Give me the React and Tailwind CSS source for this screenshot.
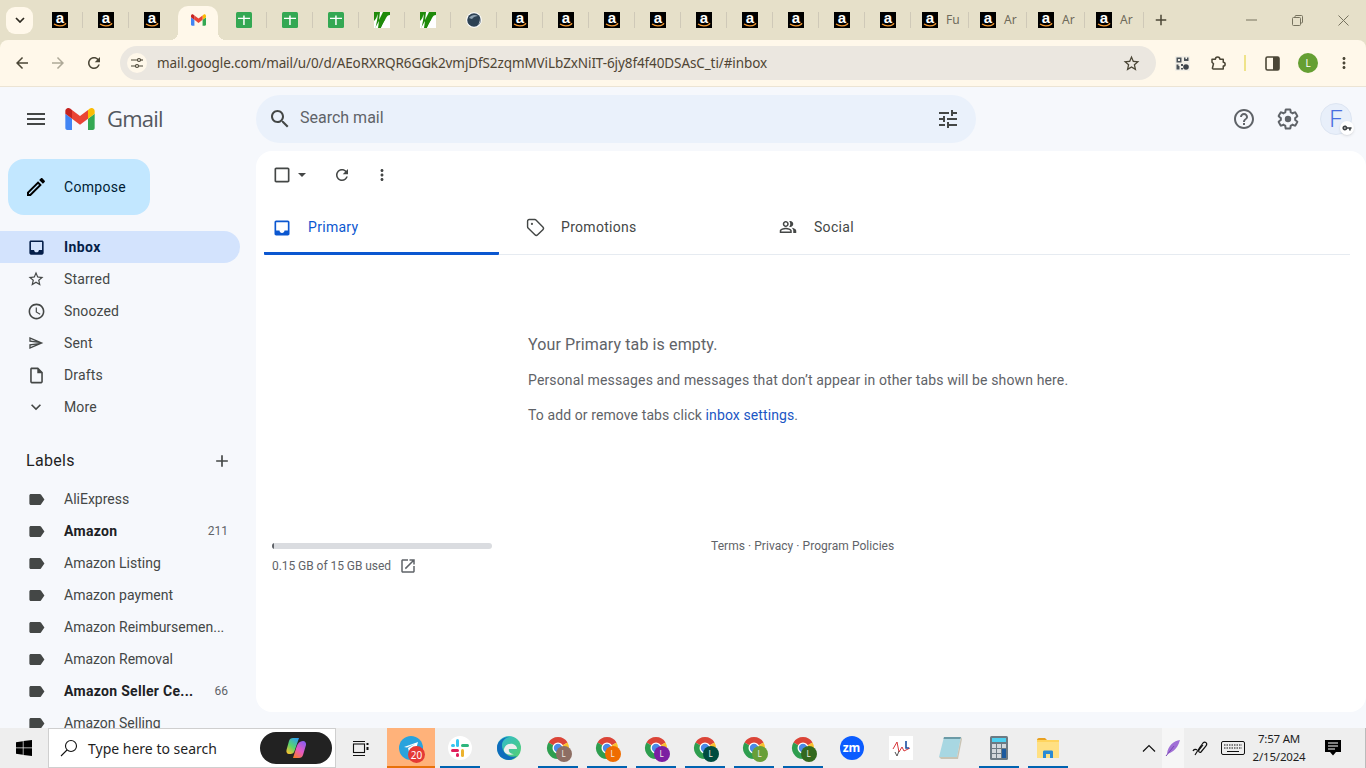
import React from "react";
import { Tag } from "lucide-react";

const P = {
  inbox: "M19 3H5c-1.1 0-2 .9-2 2v14c0 1.1.9 2 2 2h14c1.1 0 2-.9 2-2V5c0-1.1-.9-2-2-2zm0 12h-4c0 1.66-1.35 3-3 3s-3-1.34-3-3H5V5h14v10z",
  star: "M22 9.24l-7.19-.62L12 2 9.19 8.63 2 9.24l5.46 4.73L5.82 21 12 17.27 18.18 21l-1.63-7.03L22 9.24zM12 15.4l-3.76 2.27 1-4.28-3.32-2.88 4.38-.38L12 6.1l1.71 4.04 4.38.38-3.32 2.88 1 4.28L12 15.4z",
  clock: "M11.99 2C6.47 2 2 6.48 2 12s4.47 10 9.99 10C17.52 22 22 17.52 22 12S17.52 2 11.99 2zM12 20c-4.42 0-8-3.58-8-8s3.58-8 8-8 8 3.58 8 8-3.58 8-8 8zm.5-13H11v6l5.25 3.15.75-1.23-4.5-2.67z",
  send: "M4.01 6.03l7.51 3.22-7.52-1 .01-2.22m7.5 8.72L4 17.97v-2.22l7.51-1M2.01 3L2 10l15 2-15 2 .01 7L23 12 2.01 3z",
  draft: "M14 2H6c-1.1 0-1.99.9-1.99 2L4 20c0 1.1.89 2 1.99 2H18c1.1 0 2-.9 2-2V8l-6-6zM6 20V4h7v5h5v11H6z",
  more: "M16.59 8.59L12 13.17 7.41 8.59 6 10l6 6 6-6z",
  label: "M17.63 5.84C17.27 5.33 16.67 5 16 5L5 5.01C3.9 5.01 3 5.9 3 7v10c0 1.1.9 1.99 2 1.99L16 19c.67 0 1.27-.33 1.63-.84L22 12l-4.37-6.16z",
  add: "M19 13h-6v6h-2v-6H5v-2h6V5h2v6h6v2z",
  menu: "M3 18h18v-2H3v2zm0-5h18v-2H3v2zm0-7v2h18V6H3z",
  edit: "M14.06 9.02l.92.92L5.92 19H5v-.92l9.06-9.06M17.66 3c-.25 0-.51.1-.7.29l-1.83 1.83 3.75 3.75 1.83-1.83c.39-.39.39-1.02 0-1.41l-2.34-2.34c-.2-.2-.45-.29-.71-.29zm-3.6 3.19L3 17.25V21h3.75L17.81 9.94l-3.75-3.75z",
  search: "M15.5 14h-.79l-.28-.27C15.41 12.59 16 11.11 16 9.5 16 5.91 13.09 3 9.5 3S3 5.91 3 9.5 5.91 16 9.5 16c1.61 0 3.09-.59 4.23-1.57l.27.28v.79l5 4.99L20.49 19l-4.99-5zm-6 0C7.01 14 5 11.99 5 9.5S7.01 5 9.5 5 14 7.01 14 9.5 11.99 14 9.5 14z",
  tune: "M3 17v2h6v-2H3zM3 5v2h10V5H3zm10 16v-2h8v-2h-8v-2h-2v6h2zM7 9v2H3v2h4v2h2V9H7zm14 4v-2H11v2h10zm-6-4h2V7h4V5h-4V3h-2v6z",
  help: "M11 18h2v-2h-2v2zm1-16C6.48 2 2 6.48 2 12s4.48 10 10 10 10-4.48 10-10S17.52 2 12 2zm0 18c-4.41 0-8-3.59-8-8s3.59-8 8-8 8 3.59 8 8-3.59 8-8 8zm0-14c-2.21 0-4 1.79-4 4h2c0-1.1.9-2 2-2s2 .9 2 2c0 2-3 1.75-3 5h2c0-2.25 3-2.5 3-5 0-2.21-1.79-4-4-4z",
  refresh: "M17.65 6.35C16.2 4.9 14.21 4 12 4c-4.42 0-7.99 3.58-7.99 8s3.57 8 7.99 8c3.73 0 6.84-2.55 7.73-6h-2.08c-.82 2.33-3.04 4-5.65 4-3.31 0-6-2.69-6-6s2.69-6 6-6c1.66 0 3.14.69 4.22 1.78L13 11h7V4l-2.35 2.35z",
  vert: "M12 8c1.1 0 2-.9 2-2s-.9-2-2-2-2 .9-2 2 .9 2 2 2zm0 2c-1.1 0-2 .9-2 2s.9 2 2 2 2-.9 2-2-.9-2-2-2zm0 6c-1.1 0-2 .9-2 2s.9 2 2 2 2-.9 2-2-.9-2-2-2z",
  check: "M19 5v14H5V5h14m0-2H5c-1.1 0-2 .9-2 2v14c0 1.1.9 2 2 2h14c1.1 0 2-.9 2-2V5c0-1.1-.9-2-2-2z",
  people: "M16.67 13.13C18.04 14.06 19 15.32 19 17v3h4v-3c0-2.18-3.57-3.47-6.33-3.87zM15 12c2.21 0 4-1.79 4-4s-1.79-4-4-4c-.47 0-.91.1-1.33.24C14.5 5.27 15 6.58 15 8s-.5 2.73-1.33 3.76c.42.14.86.24 1.33.24zM9 12c2.21 0 4-1.79 4-4s-1.79-4-4-4-4 1.79-4 4 1.79 4 4 4zm0-6c1.1 0 2 .9 2 2s-.9 2-2 2-2-.9-2-2 .9-2 2-2zM9 13c-2.67 0-8 1.34-8 4v3h16v-3c0-2.66-5.33-4-8-4zm6 5H3v-.99C3.2 16.29 6.3 15 9 15s5.8 1.29 6 2v1z",
  open: "M19 19H5V5h7V3H5c-1.11 0-2 .9-2 2v14c0 1.1.89 2 2 2h14c1.1 0 2-.9 2-2v-7h-2v7zM14 3v2h3.59l-9.83 9.83 1.41 1.41L19 6.41V10h2V3h-7z",
  key: "M12.65 10C11.83 7.67 9.61 6 7 6c-3.31 0-6 2.69-6 6s2.69 6 6 6c2.61 0 4.83-1.67 5.65-4H17v4h4v-4h2v-4H12.65zM7 14c-1.1 0-2-.9-2-2s.9-2 2-2 2 .9 2 2-.9 2-2 2z",
  back: "M20 11H7.83l5.59-5.59L12 4l-8 8 8 8 1.41-1.41L7.83 13H20v-2z",
  fwd: "M12 4l-1.41 1.41L16.17 11H4v2h12.17l-5.58 5.59L12 20l8-8z",
};

function Mi({ d, size = 20, color = "#444746" }) {
  return (
    <svg width={size} height={size} viewBox="0 0 24 24" fill={color} className="shrink-0">
      <path d={d} />
    </svg>
  );
}

function AmazonIcon() {
  return (
    <div className="relative w-4 h-4 shrink-0 bg-black flex justify-center">
      <span className="text-[15px] leading-[11px] font-bold text-white font-['Liberation_Sans',sans-serif]">a</span>
      <svg width="16" height="16" viewBox="0 0 16 16" className="absolute left-0 top-0">
        <path d="M2 12c3.400 2.300 8 2.300 11.500.2" stroke="#f79c34" strokeWidth="1.300" fill="none" />
        <path d="M12.400 11.300l2-.3-.5 2z" fill="#f79c34" />
      </svg>
    </div>
  );
}

function GmailM({ w = 16, h = 12 }) {
  return (
    <svg width={w} height={h} viewBox="52 42 88 66" className="shrink-0">
      <path fill="#4285f4" d="M58 108h14V74L52 59v43c0 3.32 2.69 6 6 6" />
      <path fill="#34a853" d="M120 108h14c3.32 0 6-2.69 6-6V59l-20 15" />
      <path fill="#fbbc04" d="M120 48v26l20-15v-8c0-7.42-8.47-11.65-14.4-7.2" />
      <path fill="#ea4335" d="M72 74V48l24 18 24-18v26L96 92" />
      <path fill="#c5221f" d="M52 51v8l20 15V48l-5.6-4.2c-5.94-4.45-14.4-.22-14.4 7.2" />
    </svg>
  );
}

function SheetIcon() {
  return (
    <svg width="16" height="16" viewBox="0 0 16 16" className="shrink-0">
      <rect width="16" height="16" rx="1.500" fill="#34a853" />
      <path d="M2 5.700h5.200V3.500h1.500v2.200H14v1.400H8.700V13H7.200V7.100H2z" fill="#fff" />
    </svg>
  );
}

function WIcon() {
  return (
    <svg width="16" height="16" viewBox="0 0 16 16" className="shrink-0">
      <rect width="16" height="16" fill="#fff" />
      <path d="M1 0h5L5 8l4-8h7v3c-2 0-3 1-4 3l-5 10H4l1-7-4 7H0V0z" fill="#1f8a0a" />
      <path d="M0 9C2 7 3 5 3.500 2 4 5 3 9 1.500 16H0zM8 14c2-4 4-8 8-9v3c-3 1-4 4-6 8H7z" fill="#fff" />
    </svg>
  );
}

function GlobeDark() {
  return (
    <svg width="16" height="16" viewBox="0 0 16 16" className="shrink-0">
      <circle cx="8" cy="8" r="7.800" fill="#fff" />
      <circle cx="8" cy="8" r="6.800" fill="#2d4254" />
      <path d="M3 6c2-3 6-4 9-2-2 0-5 1-6 3z" fill="#8fa3b3" />
      <path d="M14 6c1 3 0 6-3 8 2-2 3-4 3-8z" fill="#fff" />
    </svg>
  );
}

const tabs = [
  [AmazonIcon], [AmazonIcon], [AmazonIcon], ["gmail"], [SheetIcon], [SheetIcon], [SheetIcon], [WIcon], [WIcon], [GlobeDark],
  [AmazonIcon], [AmazonIcon], [AmazonIcon], [AmazonIcon], [AmazonIcon], [AmazonIcon], [AmazonIcon], [AmazonIcon], [AmazonIcon],
];

function TabStrip() {
  return (
    <div className="h-10 bg-[#e6e0c9] flex items-stretch shrink-0 relative">
      <div className="w-[37px] shrink-0 flex items-center pl-[6px]">
        <div className="w-[27px] h-[27px] rounded-[9px] bg-[#fff8ea] flex items-center justify-center">
          <svg width="10" height="6" viewBox="0 0 10 6"><path d="M1 1l4 4 4-4" stroke="#2e2a20" strokeWidth="1.700" fill="none" /></svg>
        </div>
      </div>
      {tabs.map(([I], i) => {
        if (I === "gmail")
          return (
            <div key={i} className="w-[46px] shrink-0 relative flex items-center justify-center">
              <div className="absolute left-[3px] right-[3px] top-[6px] bottom-0 bg-[#fff8ea] rounded-t-[10px]" />
              <div className="absolute left-[-5px] bottom-0 w-2 h-2 bg-[radial-gradient(circle_at_0_0,transparent_8px,#fff8ea_8px)]" />
              <div className="absolute right-[-5px] bottom-0 w-2 h-2 bg-[radial-gradient(circle_at_100%_0,transparent_8px,#fff8ea_8px)]" />
              <div className="relative"><GmailM w={15} h={12} /></div>
            </div>
          );
        const noSep = i === 2 || i === 3;
        return (
          <div key={i} className="w-[46px] shrink-0 flex items-center justify-center relative">
            <I />
            {!noSep && <span className="absolute right-0 top-[12px] h-4 w-[1.5px] bg-[#cfc9b8]" />}
          </div>
        );
      })}
      {[["Fu", 58], ["Ar", 58], ["Ar", 58], ["Ar", 59]].map(([t, w], i) => (
        <div key={i} className={`shrink-0 flex items-center pl-[11px] relative ${w === 59 ? "w-[59px]" : "w-[58px]"}`}>
          <AmazonIcon />
          <span className="ml-[8px] text-[12px] text-[#6e6a5a] font-['Noto_Sans',sans-serif]">{t}</span>
          <span className="absolute right-0 top-[12px] h-4 w-[1.5px] bg-[#cfc9b8]" />
        </div>
      ))}
      <div className="w-[34px] shrink-0 flex items-center justify-center">
        <Mi d={P.add} size={18} color="#4b4636" />
      </div>
      <div className="ml-auto flex items-center text-[#6e6a5a]">
        <div className="w-[46px] flex justify-center">
          <svg width="11" height="2" viewBox="0 0 11 2"><path d="M0 1h11" stroke="#77735f" strokeWidth="1" /></svg>
        </div>
        <div className="w-[46px] flex justify-center">
          <svg width="11" height="11" viewBox="0 0 11 11" fill="none" stroke="#77735f" strokeWidth="1"><rect x=".5" y="2.500" width="8" height="8" rx="1" /><path d="M3 2.500V1.500a1 1 0 0 1 1-1h5.500a1 1 0 0 1 1 1V7a1 1 0 0 1-1 1h-1" /></svg>
        </div>
        <div className="w-[46px] flex justify-center">
          <svg width="11" height="11" viewBox="0 0 11 11" fill="none" stroke="#77735f" strokeWidth="1"><path d="M.5.500l10 10M10.500.500l-10 10" /></svg>
        </div>
      </div>
    </div>
  );
}

function ChromeToolbar() {
  const c = "#4b4636";
  return (
    <div className="h-[47px] shrink-0 bg-[#fff8ea] rounded-t-[8px] border-b border-[#ece4d4] flex items-start pl-1 pt-[6px]">
      {[[P.back, c], [P.fwd, "#aea998"], [P.refresh, c]].map(([d, col], i) => (
        <div key={i} className="w-9 h-[34px] flex items-center justify-center"><Mi d={d} size={18} color={col} /></div>
      ))}
      <div className="ml-2 w-[1036px] h-[34px] rounded-full bg-[#ebe7e0] flex items-center pl-[7px] pr-[15px]">
        <div className="w-5 h-5 rounded-full bg-[#fff8ea] flex items-center justify-center">
          <svg width="12" height="12" viewBox="0 0 12 12" fill="none" stroke="#4b4636" strokeWidth="1.200"><path d="M0 3h6M0 9h4M8 9h4" /><circle cx="8" cy="3" r="1.500" /><circle cx="6" cy="9" r="1.500" /><path d="M9.500 3H12" /></svg>
        </div>
        <span className="ml-[10px] text-[13.5px] text-[#4f4534] tracking-[-0.1px] font-['Noto_Sans',sans-serif] whitespace-nowrap">mail.google.com/mail/u/0/d/AEoRXRQR6GGk2vmjDfS2zqmMViLbZxNiIT-6jy8f4f40DSAsC_ti/#inbox</span>
        <div className="ml-auto"><Mi d={P.star} size={19} color={c} /></div>
      </div>
      <div className="ml-2 w-9 h-[34px] flex items-center justify-center">
        <svg width="15" height="15" viewBox="0 0 15 15">
          <rect width="15" height="15" rx="1" fill="#f2efe6" />
          <path d="M1.500 1.500h5v5h-5zM3 3v2h2V3zM9 1.500h1.500V3H12V1.500h1.500V5H9zM1.500 8.500h2V10h1v3.500h-3zM6 8h2v2H6zM6 12h2v1.500H6z" fill="#4b5258" />
          <circle cx="11" cy="11" r="2.800" fill="#3d434a" />
        </svg>
      </div>
      <div className="w-9 h-[34px] flex items-center justify-center">
        <svg width="18" height="18" viewBox="0 0 24 24" fill="none" stroke={c} strokeWidth="2"><path d="M4 7h4.500a3 3 0 0 1 6 0H19v4a2.500 2.500 0 0 1 0 5v4H5.500l-1-1 1.500-6-2-2z" strokeLinejoin="round" /></svg>
      </div>
      <div className="w-[18px] h-[34px] flex items-center justify-center">
        <span className="w-[2px] h-4 bg-[#efe38a]" />
      </div>
      <div className="w-9 h-[34px] flex items-center justify-center">
        <svg width="15" height="15" viewBox="0 0 15 15"><rect x="1" y="1" width="13" height="13" rx="1.500" fill="none" stroke={c} strokeWidth="1.600" /><rect x="8" y="1" width="6" height="13" fill={c} /></svg>
      </div>
      <div className="w-9 h-[34px] flex items-center justify-center">
        <div className="w-5 h-5 rounded-full bg-[#659f33] text-white text-[10px] flex items-center justify-center font-['Noto_Sans',sans-serif]">L</div>
      </div>
      <div className="w-9 h-[34px] flex items-center justify-center"><Mi d={P.vert} size={18} color={c} /></div>
    </div>
  );
}

const nav = [
  [P.inbox, "Inbox", 19, true],
  [P.star, "Starred", 18],
  [P.clock, "Snoozed", 19],
  [P.send, "Sent", 16],
  [P.draft, "Drafts", 19],
  [P.more, "More", 20],
];

const labels = [
  ["AliExpress"],
  ["Amazon", "211", true],
  ["Amazon Listing"],
  ["Amazon payment"],
  ["Amazon Reimbursemen..."],
  ["Amazon Removal"],
  ["Amazon Seller Ce...", "66", true],
  ["Amazon Selling"],
];

function Sidebar() {
  return (
    <aside className="w-64 shrink-0 overflow-hidden h-full">
      <div className="h-16 flex items-center pl-[24px]">
        <Mi d={P.menu} size={24} color="#444746" />
        <div className="ml-[17px]"><GmailM w={30} h={22} /></div>
        <span className="ml-3 -mt-[2px] text-[22px] leading-none text-[#545860] font-['Open_Sans',sans-serif] tracking-[-0.8px]">Gmail</span>
      </div>
      <div className="ml-2 mt-2 w-[142px] h-14 rounded-2xl bg-[#c2e7ff] flex items-center pl-[16px]">
        <Mi d={P.edit} size={24} color="#000" />
        <span className="ml-[16px] text-[14px] font-normal text-[#001d35] tracking-[0.3px]">Compose</span>
      </div>
      <nav className="mt-4 w-60">
        {nav.map(([d, t, s, act]) => (
          <div key={t} className={`h-8 flex items-center pl-[26px] rounded-r-full ${act ? "bg-[#d3e3fd]" : ""}`}>
            <div className="w-5 flex justify-center"><Mi d={d} size={s} color={act ? "#041e49" : "#444746"} /></div>
            <span className={`ml-[18px] text-[14px] ${act ? "font-bold text-[#041e49] tracking-[0.4px]" : "text-[#444746] tracking-[0.15px]"}`}>{t}</span>
          </div>
        ))}
      </nav>
      <div className="mt-[22px] h-8 flex items-center justify-between pl-[26px] pr-[24px]">
        <span className="text-[16px] font-normal text-[#1f1f1f] tracking-[0.3px]">Labels</span>
        <Mi d={P.add} size={20} color="#444746" />
      </div>
      <div className="mt-[6px]">
        {labels.map(([t, n, b]) => (
          <div key={t} className="h-8 flex items-center pl-[26px] pr-[28px]">
            <div className="w-5 flex justify-center"><Mi d={P.label} size={19} color="#444746" /></div>
            <span className={`ml-[18px] text-[14px] whitespace-nowrap ${b ? "font-bold text-[#202124] tracking-[0.3px]" : "text-[#444746]"}`}>{t}</span>
            {n && <span className="ml-auto text-[12px] text-[#5f6368]">{n}</span>}
          </div>
        ))}
      </div>
    </aside>
  );
}

function MainHeader() {
  return (
    <div className="h-16 shrink-0 flex items-center">
      <div className="w-[720px] h-12 rounded-full bg-[#eaf1fb] flex items-center pl-[12px] pr-[16px]">
        <Mi d={P.search} size={24} color="#444746" />
        <span className="ml-[8px] -mt-[2px] text-[16px] text-[#5f6368]">Search mail</span>
        <div className="ml-auto"><Mi d={P.tune} size={24} color="#444746" /></div>
      </div>
      <div className="ml-auto flex items-center pr-[14px]">
        <Mi d={P.help} size={24} color="#5f6368" />
        <div className="ml-[20px]">
          <svg width="24" height="24" viewBox="0 0 24 24" fill="none" stroke="#5f6368" strokeWidth="2">
            <path d="M19.140 12.940c.04-.3.06-.61.06-.94 0-.32-.02-.64-.07-.94l2.030-1.580c.18-.14.23-.41.12-.61l-1.920-3.320c-.12-.22-.37-.29-.59-.22l-2.390.96c-.5-.38-1.030-.7-1.620-.94l-.36-2.540c-.04-.24-.24-.41-.48-.41h-3.840c-.24 0-.43.17-.47.41l-.36 2.540c-.59.24-1.130.57-1.620.94l-2.390-.96c-.22-.08-.47 0-.59.22L2.740 8.870c-.12.21-.08.47.12.61l2.030 1.580c-.05.3-.09.63-.09.94s.02.64.07.94l-2.030 1.580c-.18.14-.23.41-.12.61l1.920 3.320c.12.22.37.29.59.22l2.390-.96c.5.38 1.030.7 1.620.94l.36 2.540c.05.24.24.41.48.41h3.840c.24 0 .44-.17.47-.41l.36-2.540c.59-.24 1.130-.56 1.620-.94l2.390.96c.22.08.47 0 .59-.22l1.920-3.320c.12-.22.07-.47-.12-.61l-2.010-1.580z" />
            <circle cx="12" cy="12" r="3.200" fill="#5f6368" stroke="none" />
          </svg>
        </div>
        <div className="ml-[20px] relative w-8 h-8 rounded-full bg-[#e8effa] border border-[#dde5f2] flex items-center justify-center">
          <span className="text-[24px] font-light leading-none text-[#4a6ee0]">F</span>
          <div className="absolute -right-[3px] -bottom-[1px] w-[14px] h-[14px] rounded-full bg-white shadow flex items-center justify-center">
            <Mi d={P.key} size={10} color="#3c4043" />
          </div>
        </div>
      </div>
    </div>
  );
}

function Panel() {
  return (
    <div className="h-[561px] shrink-0 bg-white rounded-2xl flex flex-col overflow-hidden">
      <div className="h-12 shrink-0 flex items-center pl-[16px]">
        <Mi d={P.check} size={20} color="#444746" />
        <svg width="8" height="4" viewBox="0 0 10 5" className="ml-[6px]"><path d="M0 0h10L5 5z" fill="#444746" /></svg>
        <div className="ml-[27px]"><Mi d={P.refresh} size={18} color="#444746" /></div>
        <div className="ml-[22px]"><Mi d={P.vert} size={18} color="#444746" /></div>
      </div>
      <div className="ml-2 mr-4 h-14 shrink-0 flex border-b border-[#e6ebf1]">
        <div className="w-[235px] mr-[18px] h-14 border-b-[3px] border-[#0b57d0] flex items-center pl-[8px] pt-[4px] rounded-b-[1px]">
          <Mi d={P.inbox} size={20} color="#0b57d0" />
          <span className="ml-[16px] text-[14px] font-normal text-[#0b57d0] tracking-[0.3px]">Primary</span>
        </div>
        <div className="w-[253px] flex items-center pl-[9px] pt-[1px]">
          <Tag size={19} color="#444746" strokeWidth={1.8} className="shrink-0" />
          <span className="ml-[16px] text-[14px] font-normal text-[#444746] tracking-[0.3px]">Promotions</span>
        </div>
        <div className="flex items-center pl-[9px] pt-[1px]">
          <Mi d={P.people} size={18} color="#444746" />
          <span className="ml-[17px] text-[14px] font-normal text-[#444746] tracking-[0.3px]">Social</span>
        </div>
      </div>
      <div className="pl-[272px] pt-[80px] text-[#5f6368]">
        <div className="text-[16px] leading-5 tracking-[0.12px]">Your Primary tab is empty.</div>
        <div className="mt-[15px] text-[14px] leading-5 tracking-[0.14px]">Personal messages and messages that don’t appear in other tabs will be shown here.</div>
        <div className="mt-[15px] text-[14px] leading-5 tracking-[0.1px]">To add or remove tabs click <span className="text-[#1a56c4]">inbox settings</span>.</div>
      </div>
      <div className="mt-[118px] flex pl-4">
        <div className="w-[220px]">
          <div className="h-[6px] rounded-full bg-[#dadce0] overflow-hidden"><div className="w-[2px] h-full bg-[#5f6368]" /></div>
          <div className="mt-[8px] flex items-center text-[12px] text-[#5f6368] tracking-[-0.05px]">
            0.15 GB of 15 GB used
            <div className="ml-[8px]"><Mi d={P.open} size={18} color="#5f6368" /></div>
          </div>
        </div>
        <div className="ml-[219px] -mt-[4px] text-[12px] leading-[14px] text-[#5f6368] tracking-[0.05px]">Terms · Privacy · Program Policies</div>
      </div>
    </div>
  );
}

function ChromeIcon({ badge, text = "#f1e9e2" }) {
  return (
    <div className="relative w-6 h-6">
      <svg width="24" height="24" viewBox="0 0 24 24">
        <path d="M12 12 2.470 6.500A11 11 0 0 1 21.530 6.500z" fill="#db4437" />
        <path d="M12 12 21.530 6.500A11 11 0 0 1 12 23z" fill="#fbc02d" />
        <path d="M12 12 12 23A11 11 0 0 1 2.470 6.500z" fill="#2e9e4f" />
        <circle cx="12" cy="12" r="5.500" fill="#fff" />
        <circle cx="12" cy="12" r="4.200" fill="#4a8ae8" />
      </svg>
      <div className="absolute left-[10px] top-[10px] w-4 h-4 rounded-full flex items-center justify-center text-[8px] font-['Noto_Sans',sans-serif]" style={{ background: badge, color: text }}>L</div>
    </div>
  );
}

function Tile({ children, bar = true }) {
  return (
    <div className="w-[49px] h-full shrink-0 relative flex items-center justify-center">
      {children}
      {bar && <span className="absolute bottom-0 left-[5px] w-10 h-[2px] bg-[#0063b1]" />}
    </div>
  );
}

function Taskbar() {
  return (
    <div className="h-10 shrink-0 bg-[#eeeeee] flex items-stretch font-['Noto_Sans',sans-serif]">
      <div className="w-12 shrink-0 flex items-center justify-center">
        <svg width="16" height="16" viewBox="0 0 16 16" fill="#000"><path d="M0 2.200 6.800 1.200V7.500H0zM7.500 1.100 16 0V7.500H7.500zM0 8.200H6.800V14.800L0 13.800zM7.500 8.200H16V16L7.500 14.900z" /></svg>
      </div>
      <div className="w-[288px] shrink-0 bg-white border border-[#cfcfcf] flex items-center pl-[11px] pr-[3px]">
        <svg width="18" height="18" viewBox="0 0 18 18" fill="none" stroke="#111" strokeWidth="1.100"><circle cx="11" cy="7" r="5.500" /><path d="M7 11l-6 6" /></svg>
        <span className="ml-[10px] text-[14px] text-[#1f1f1f]">Type here to search</span>
        <div className="ml-auto w-[72px] h-8 rounded-full bg-[#222] flex items-center justify-center">
          <svg width="22" height="22" viewBox="0 0 22 22">
            <defs>
              <linearGradient id="cp1" x1="0.800" y1="0" x2="0.200" y2="1"><stop offset="0" stopColor="#2f9ff0" /><stop offset=".55" stopColor="#5bd46a" /><stop offset="1" stopColor="#f7c22f" /></linearGradient>
              <linearGradient id="cp2" x1="0.800" y1="0" x2="0.200" y2="1"><stop offset="0" stopColor="#8a5cf0" /><stop offset=".55" stopColor="#e85ac0" /><stop offset="1" stopColor="#f77a2f" /></linearGradient>
            </defs>
            <path d="M8 1h6L9.500 14c-.5 2-2 3-4 3H4C2 17 1 15 1.500 13L4 4c.5-2 2-3 4-3z" fill="url(#cp1)" />
            <path d="M18 4c2 0 3.500 2 3 4L18 18c-.5 2-2 3-4 3H8l3.500-11C12.500 6 15 4 18 4z" fill="url(#cp2)" />
          </svg>
        </div>
      </div>
      <div className="w-[51px] shrink-0 flex items-center justify-center pr-[3px]">
        <svg width="17" height="17" viewBox="0 0 17 17" fill="none" stroke="#111" strokeWidth="1.100"><rect x="1.500" y="4" width="11" height="8.500" /><path d="M1 1.500h12M1 15.500h12" /><rect x="14.500" y="3" width="2" height="2" fill="#111" stroke="none" /><rect x="14.500" y="7" width="2" height="3" fill="#111" stroke="none" /></svg>
      </div>
      <div className="w-12 h-full shrink-0 relative flex items-center justify-center bg-[#ffb27a]">
        <div className="relative w-6 h-6 rounded-full bg-[#2aa3dd] flex items-center justify-center">
          <svg width="16" height="14" viewBox="0 0 16 14"><path d="M1 6 15 1l-3 11-4-3-2 2-1-4 7-4-8 3.500z" fill="#fff" /></svg>
          <div className="absolute left-[9px] top-[10px] w-[17px] h-[17px] rounded-full bg-[#e53935] text-white text-[10px] leading-none flex items-center justify-center">20</div>
        </div>
        <span className="absolute bottom-0 left-0 right-0 h-[2px] bg-[#e8710a]" />
      </div>
      <Tile>
        <svg width="24" height="24" viewBox="0 0 24 24">
          <circle cx="12" cy="12" r="12" fill="#fff" />
          <rect x="8" y="3" width="3" height="8" rx="1.500" fill="#36c5f0" />
          <rect x="3" y="13" width="8" height="3" rx="1.500" fill="#e01e5a" />
          <rect x="13" y="8" width="8" height="3" rx="1.500" fill="#2eb67d" />
          <rect x="13" y="13" width="3" height="8" rx="1.500" fill="#ecb22e" />
          <rect x="3" y="8" width="4" height="3" rx="1.500" fill="#36c5f0" />
          <rect x="8" y="17" width="3" height="4" rx="1.500" fill="#e01e5a" />
        </svg>
      </Tile>
      <Tile bar={false}>
        <svg width="24" height="24" viewBox="0 0 24 24">
          <defs>
            <linearGradient id="ed1" x1="0" y1="0" x2="1" y2="1"><stop offset="0" stopColor="#2bb8d8" /><stop offset="1" stopColor="#58d26a" /></linearGradient>
          </defs>
          <circle cx="12" cy="12" r="12" fill="url(#ed1)" />
          <path d="M0 12C0 5 6 1 12 1c-5 1-9 6-6 13 2 5 8 8 14 6-2 2-5 4-8 4C5 24 0 19 0 12z" fill="#0f6cbd" />
          <path d="M7 13c1-4 5-6 9-5 3 1 4 3 4 5h-8c-1 3 2 5 5 5-5 2-11-1-10-5z" fill="#eeeeee" />
        </svg>
      </Tile>
      {["#8d6e63", "#ef6c00", "#7b1fa2", "#004d40", "#689f38", "#33691e"].map((c) => (
        <Tile key={c}><ChromeIcon badge={c} /></Tile>
      ))}
      <Tile bar={false}>
        <div className="w-6 h-6 rounded-full bg-[#0b5cff] text-white text-[12px] font-bold leading-none flex items-center justify-center">zm</div>
      </Tile>
      <Tile bar={false}>
        <svg width="24" height="24" viewBox="0 0 24 24">
          <rect width="24" height="24" fill="#fff" />
          <path d="M4 13 8 6l2 10 3-5 2 4 6-3" stroke="#d8363a" strokeWidth="1" fill="none" />
          <path d="M17 5v7h3" stroke="#1c4fa1" strokeWidth="1.600" fill="none" />
          <path d="M6 16l2 4 2-5" stroke="#555" strokeWidth="1" fill="none" />
        </svg>
      </Tile>
      <Tile bar={false}>
        <svg width="24" height="24" viewBox="0 0 24 24">
          <path d="M6 1h17l-4 20H1z" fill="#a8d7e2" />
          <path d="M6 1h17l-.5 2H5.500z" fill="#6b9aa6" />
          <path d="M19 21 23 1l1 2-4 20H3l-2-2z" fill="#c9c4b4" />
        </svg>
      </Tile>
      <Tile>
        <svg width="18" height="24" viewBox="0 0 18 24">
          <rect width="18" height="24" rx="1.500" fill="#6c7a83" />
          <rect x="2" y="2" width="14" height="4" fill="#4dd0f0" />
          <path d="M2 8h4v4H2zM7 8h4v4H7zM2 13h4v4H2zM7 13h4v4H7zM2 18h4v4H2zM7 18h4v4H7z" fill="#d2d8dc" />
          <rect x="12" y="8" width="4" height="4" fill="#d2d8dc" />
          <rect x="12" y="13" width="4" height="9" fill="#1c5a9e" />
        </svg>
      </Tile>
      <Tile>
        <svg width="22" height="20" viewBox="0 0 22 20">
          <path d="M0 2c0-1 .5-2 2-2h6l2 2H0z" fill="#e8a020" />
          <rect y="2" width="22" height="18" fill="#ffd45e" />
          <rect y="4" width="22" height="16" fill="#ffe083" />
          <path d="M6 20v-6c0-1 .5-1.500 1.500-1.500h7c1 0 1.500.5 1.500 1.500v6h-3v-4H9v4z" fill="#2a8ad4" />
        </svg>
      </Tile>
      <div className="ml-auto flex items-stretch">
        <div className="w-[25px] flex items-center justify-center pr-[1px]">
          <svg width="14" height="8" viewBox="0 0 14 8" fill="none" stroke="#111" strokeWidth="1.200"><path d="M1 7.500l6-6 6 6" /></svg>
        </div>
        <div className="w-[22px] bg-[#f6f6f6] flex items-center justify-center">
          <svg width="16" height="18" viewBox="0 0 16 18"><path d="M15 1C9 2 3 6 2 15c3-1 10-3 13-14z" fill="#a06fd6" /><path d="M1 17 9 7" stroke="#7b45b5" strokeWidth="1" /></svg>
        </div>
        <div className="w-[34px] flex items-center justify-center">
          <svg width="18" height="18" viewBox="0 0 18 18" fill="none" stroke="#111" strokeWidth="1.200"><path d="M3 16c2-3 4-7 8-12 2-2 5 0 3 3l-5 6c-1 1-3 0-2-2l4-5" /><path d="M1 12c1-2 3-2 4-1" /></svg>
        </div>
        <div className="w-[30px] flex items-center justify-center">
          <svg width="24" height="14" viewBox="0 0 24 14" fill="none" stroke="#111" strokeWidth="1"><rect x=".5" y=".5" width="23" height="13" rx="1.500" /><path d="M3 4h18M3 7h18" strokeDasharray="1.500 1" /><path d="M6 10.500h12" /></svg>
        </div>
        <div className="w-[64px] pr-[2px] flex flex-col items-center justify-center text-[11.5px] tracking-[-0.2px] leading-[18px] text-[#1f1f1f]">
          <span>7:57 AM</span>
          <span>2/15/2024</span>
        </div>
        <div className="w-[42px] flex items-center justify-center">
          <svg width="16" height="16" viewBox="0 0 16 16"><path d="M0 0h16v12h-5l-3 3.500L5 12H0z" fill="#000" /><path d="M3 3h10M3 6h10M3 9h7" stroke="#fff" strokeWidth="1" /></svg>
        </div>
        <div className="w-3 border-r border-[#bbb]" />
      </div>
    </div>
  );
}

export default function App() {
  return (
    <div className="w-[1366px] h-[768px] overflow-hidden flex flex-col bg-[#e6e0c9] font-['Roboto',sans-serif]">
      <TabStrip />
      <ChromeToolbar />
      <div className="h-[641px] shrink-0 flex bg-[#f6f8fc] overflow-hidden">
        <Sidebar />
        <main className="flex-1 flex flex-col">
          <MainHeader />
          <Panel />
        </main>
      </div>
      <Taskbar />
    </div>
  );
}
